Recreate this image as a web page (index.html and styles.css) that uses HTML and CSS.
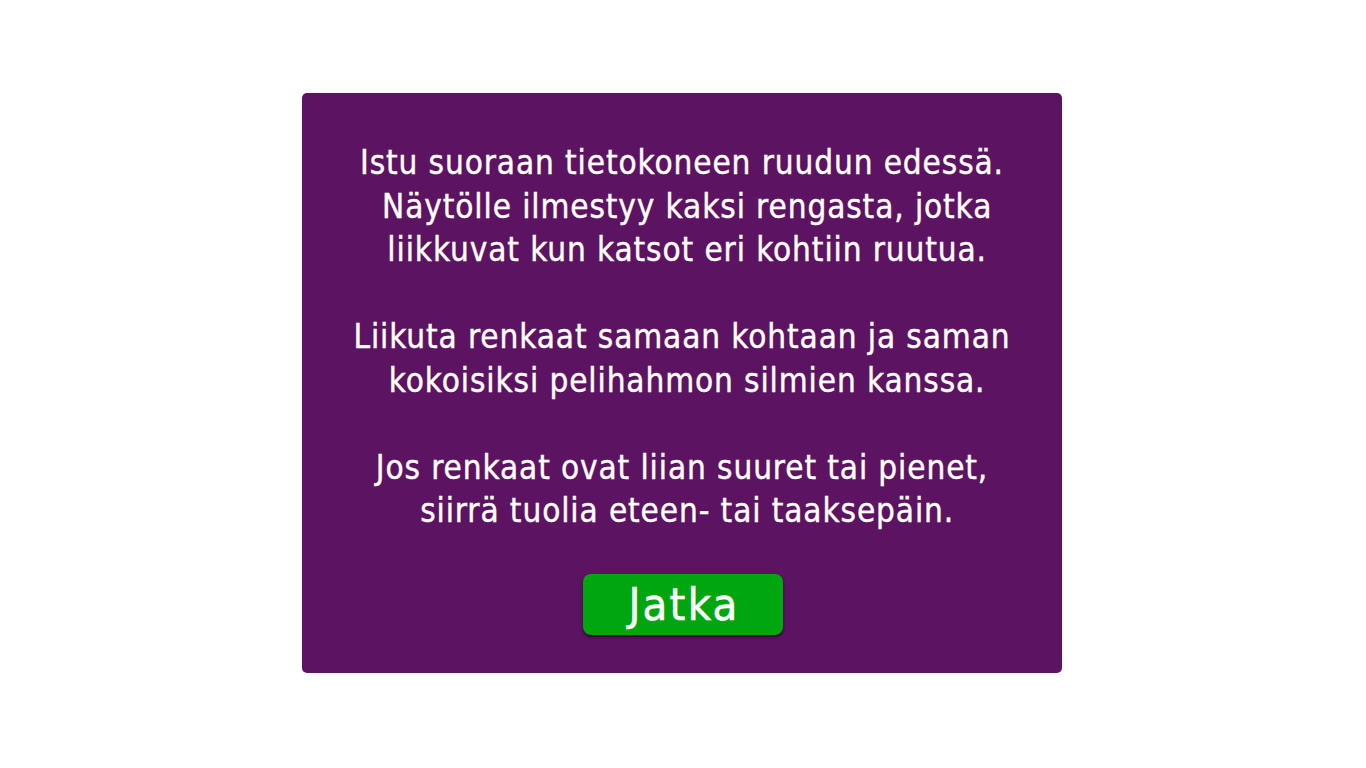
FILE: index.html
```html
<!DOCTYPE html>
<html lang="fi">
<head>
<meta charset="utf-8">
<title>Ohjeet</title>
<link rel="stylesheet" href="styles.css">
</head>
<body>
<main class="stage">
  <section class="panel">
    <div class="instructions">
      <p>Istu suoraan tietokoneen ruudun edessä.<br>&nbsp;Näytölle ilmestyy kaksi rengasta, jotka<br>&nbsp;liikkuvat kun katsot eri kohtiin ruutua.</p>
      <p>Liikuta renkaat samaan kohtaan ja saman<br>&nbsp;kokoisiksi pelihahmon silmien kanssa.</p>
      <p>Jos renkaat ovat liian suuret tai pienet,<br>&nbsp;siirrä tuolia eteen- tai taaksepäin.</p>
    </div>
    <button class="continue">Jatka</button>
  </section>
</main>
</body>
</html>
```
FILE: styles.css
```css
html, body {
  margin: 0;
  padding: 0;
  background: #ffffff;
}
.stage {
  width: 1366px;
  height: 768px;
  display: flex;
  justify-content: center;
  padding-top: 93px;
  box-sizing: border-box;
}
.panel {
  width: 760px;
  height: 580px;
  margin-left: -2px;
  background: #5c1361;
  border-radius: 5px;
  display: flex;
  flex-direction: column;
  align-items: center;
  padding-top: 48px;
  box-sizing: border-box;
  font-family: "DejaVu Sans Condensed", "DejaVu Sans", sans-serif;
  color: #ffffff;
}
.instructions {
  text-align: center;
  font-size: 33px;
  line-height: 43.5px;
  letter-spacing: 0.9px;
  -webkit-text-stroke: 0.4px #ffffff;
}
.instructions p {
  margin: 0 0 43.5px 0;
}
.continue {
  width: 200px;
  height: 61px;
  margin-top: -2px;
  margin-left: 2px;
  background: #00a60f;
  border: none;
  border-radius: 8px;
  box-shadow: 0 2px 3px rgba(0,0,0,0.55);
  color: #ffffff;
  font-family: "DejaVu Sans Condensed", "DejaVu Sans", sans-serif;
  font-size: 45px;
  letter-spacing: 2.2px;
  -webkit-text-stroke: 0.5px #ffffff;
  padding: 0 0 0 2px;
}
```
